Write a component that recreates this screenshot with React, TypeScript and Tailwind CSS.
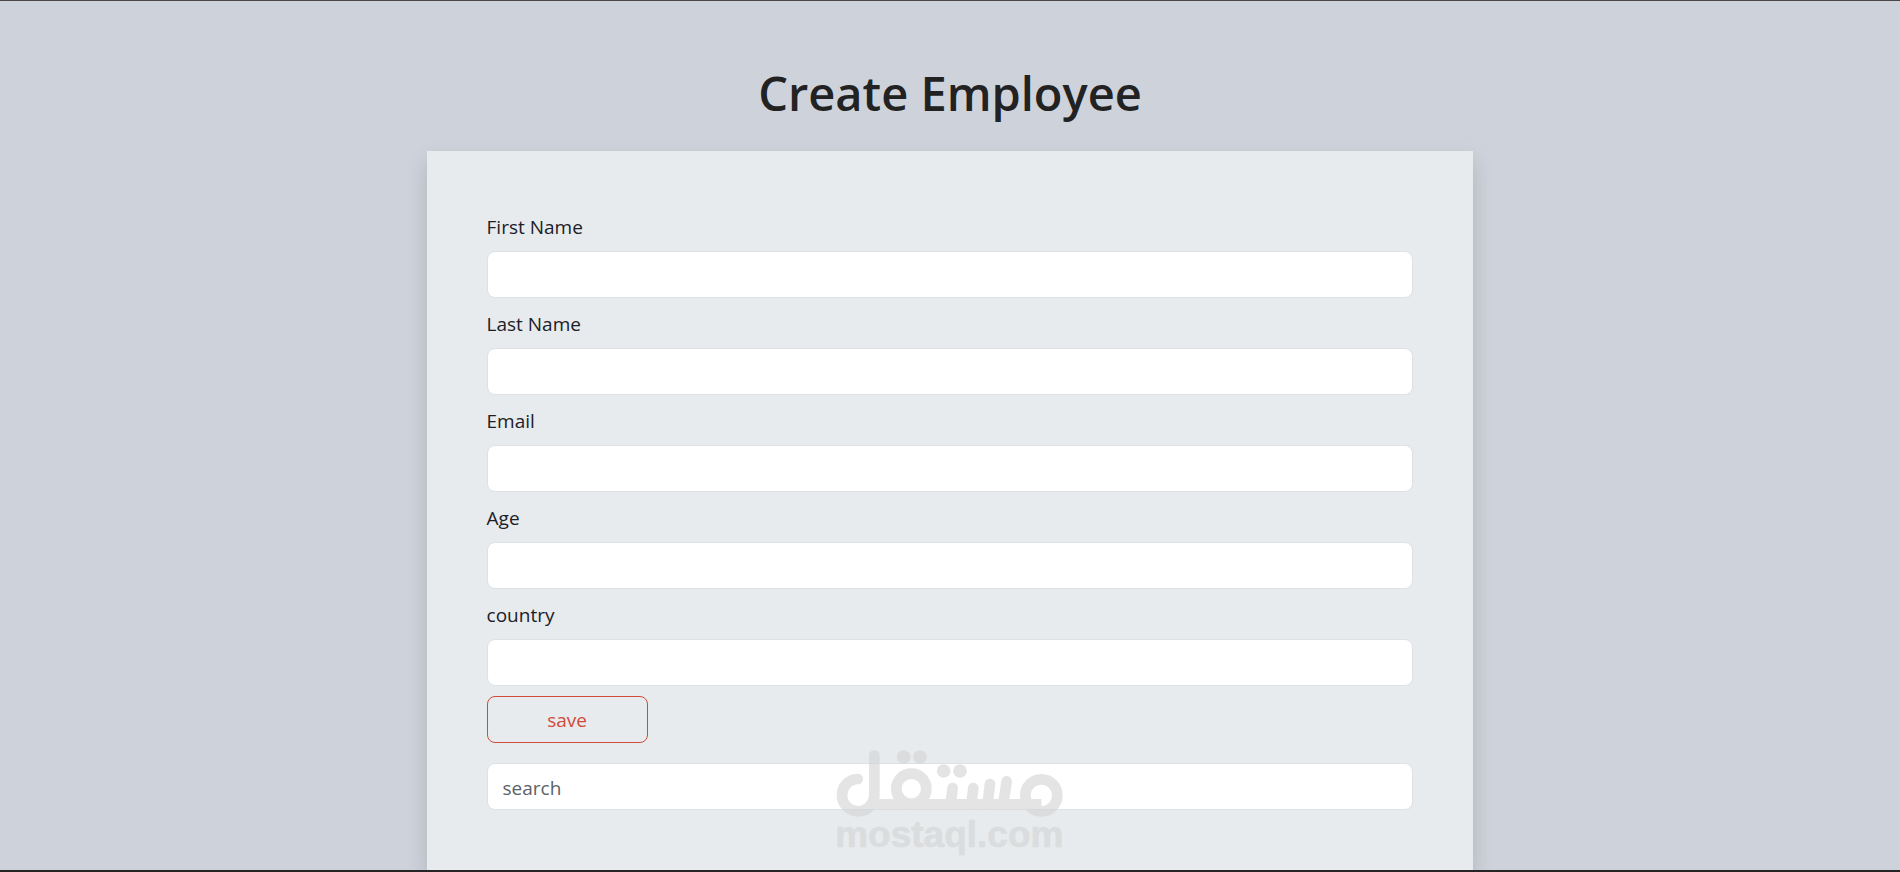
const fields = [
  { id: "firstName", label: "First Name", type: "text" },
  { id: "lastName", label: "Last Name", type: "text" },
  { id: "email", label: "Email", type: "email" },
  { id: "age", label: "Age", type: "text" },
  { id: "country", label: "country", type: "text" },
];

const inputClass =
  "block h-[47px] w-full rounded-lg border border-[#dee2e6] bg-white px-[15px] pt-[2px] text-[#212529] outline-none placeholder:text-[#5b6269] placeholder:opacity-100";

function Watermark() {
  return (
    <svg
      className="pointer-events-none absolute -bottom-0.5 left-1/2 h-[137px] w-[260px] -translate-x-1/2"
      viewBox="0 0 780 411"
      aria-hidden="true"
    >
      <g opacity="0.6" fill="#d4d3d3" stroke="none">
        <g fill="none" stroke="#d4d3d3" strokeWidth="32" strokeLinecap="round" strokeLinejoin="round">
          <path d="M113 132A48.500 48.500 0 1 0 163 181V61" />
          <path d="M158 208H664" strokeLinecap="butt" />
          <circle cx="274" cy="161" r="45" />
          <path d="M392 206L398 159M454 206L460 159M503 206L510 147M550 206L560 139" />
          <circle cx="664" cy="181" r="48" />
        </g>
        <circle cx="251" cy="66" r="20.500" />
        <circle cx="300" cy="66" r="20.500" />
        <circle cx="371" cy="108" r="20.500" />
        <circle cx="420" cy="108" r="20.500" />
        <text
          x="388"
          y="335"
          textAnchor="middle"
          fontFamily="'Liberation Sans', Arial, sans-serif"
          fontWeight="700"
          fontSize="111"
          stroke="#d4d3d3"
          strokeWidth="2"
          strokeLinejoin="round"
        >
          mostaql.com
        </text>
      </g>
    </svg>
  );
}

export default function App() {
  return (
    <div className="relative flex h-screen flex-col overflow-hidden border-t border-b-2 border-t-[#4b4648] border-b-[#262424] bg-[#ced3db] font-['Open_Sans','Noto_Sans',sans-serif] text-[19px] text-[#1b2026]">
      <main className="mx-auto flex w-[55.1%] grow flex-col pt-[62px]">
        <h1 className="mb-7 text-center text-[47px] leading-[60px] font-semibold text-[#222222]">
          Create Employee
        </h1>
        <form
          className="grow bg-[#e7ebee] p-[60px] shadow-[0_10px_20px_rgba(0,0,0,0.15)]"
          onSubmit={(e) => e.preventDefault()}
        >
          {fields.map((f) => (
            <div key={f.id} className="mb-[10px]">
              <label htmlFor={f.id} className="mb-2 block leading-8">
                {f.label}
              </label>
              <input id={f.id} name={f.id} type={f.type} className={inputClass} />
            </div>
          ))}
          <button
            type="submit"
            className="mb-5 block h-[47px] w-[161px] rounded-lg border border-[#d14b3a] pt-[2px] text-[#d14b3a]"
          >
            save
          </button>
          <input type="search" aria-label="search" placeholder="search" className={inputClass} />
        </form>
      </main>
      <Watermark />
    </div>
  );
}
